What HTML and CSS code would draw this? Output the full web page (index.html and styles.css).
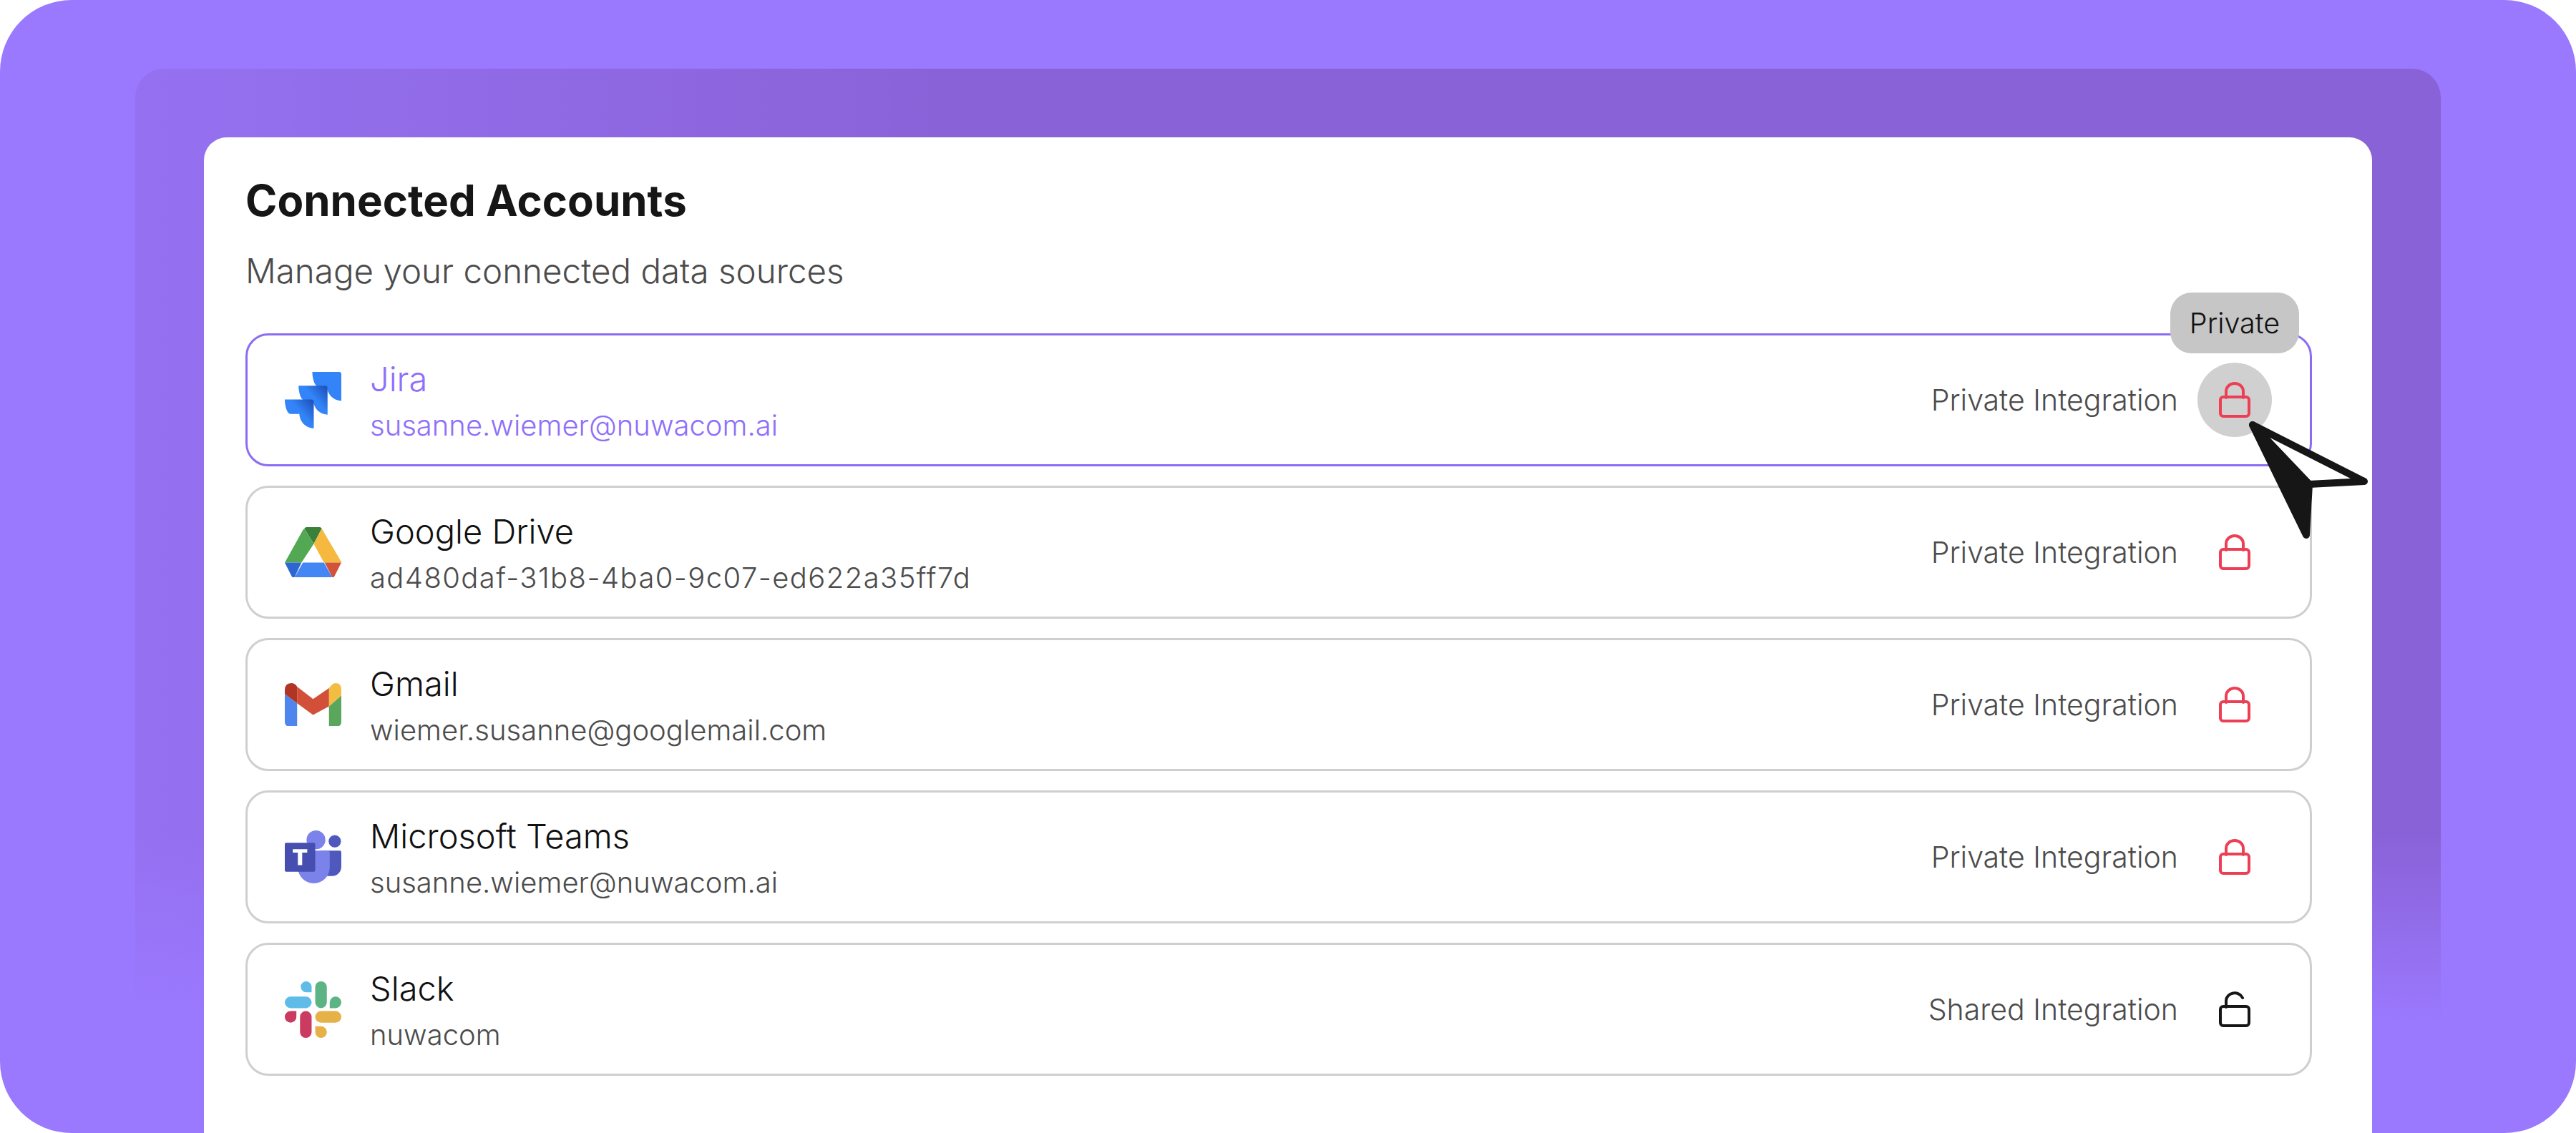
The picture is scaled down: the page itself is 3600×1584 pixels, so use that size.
FILE: index.html
```html
<!DOCTYPE html>
<html lang="en">
<head>
<meta charset="utf-8">
<title>Connected Accounts</title>
<link rel="stylesheet" href="styles.css">
</head>
<body>
<div class="frame">
  <div class="panel">
    <main class="card">
      <h1 class="title">Connected Accounts</h1>
      <p class="subtitle">Manage your connected data sources</p>
      <ul class="list">
        <li class="row row-active">
          <svg class="logo" viewBox="0 0 78 78"><defs><linearGradient id="j2" x1="0.95" y1="0.1" x2="0.55" y2="0.45"><stop offset="0" stop-color="#1f55c0"/><stop offset="1" stop-color="#3384f8"/></linearGradient></defs><path fill="#3384f8" d="M38 0H75a3 3 0 0 1 3 3V40C66 39 59 31 58 20H46C41 20 38 8 38 0Z"/><path fill="url(#j2)" d="M19 19H56a3 3 0 0 1 3 3V59C47 58 40 50 39 39H27C22 39 19 27 19 19Z"/><path fill="url(#j2)" d="M0 38H37a3 3 0 0 1 3 3V78C28 77 21 69 20 58H8C3 58 0 46 0 38Z"/></svg>
          <div class="info"><div class="name">Jira</div><div class="account">susanne.wiemer@nuwacom.ai</div></div>
          <span class="scope">Private Integration</span>
          <div class="lock-wrap lock-hover">
            <svg class="lock lock-red" viewBox="0 0 44 50"><path d="M10 22V13a12 11 0 0 1 24 0V22"/><rect x="2" y="21" width="40" height="27" rx="4"/></svg>
            <span class="tip">Private</span>
          </div>
        </li>
        <li class="row">
          <svg class="logo" viewBox="0 0 78 70"><path fill="#3a7f3a" d="M30 0H48Q50 0 51 2L40 23L27 2Q28 0 30 0Z"/><path fill="#53a853" d="M27 2L40 23L23 49H0L25 4Z"/><path fill="#f4b93e" d="M51 2L78 48L78 49H54L40 23Z"/><path fill="#2d65d1" d="M0 49H23L13 70H12Q10 69 9 67Z"/><path fill="#4486f4" d="M25 49H54L66 70H13Z"/><path fill="#d2523a" d="M55 49H78L69 67Q68 69 66 70Z"/></svg>
          <div class="info"><div class="name">Google Drive</div><div class="account account-id">ad480daf-31b8-4ba0-9c07-ed622a35ff7d</div></div>
          <span class="scope">Private Integration</span>
          <div class="lock-wrap">
            <svg class="lock lock-red" viewBox="0 0 44 50"><path d="M10 22V13a12 11 0 0 1 24 0V22"/><rect x="2" y="21" width="40" height="27" rx="4"/></svg>
          </div>
        </li>
        <li class="row">
          <svg class="logo" viewBox="0 0 78 60"><path fill="#4f86ee" d="M0 15L17 28V60H6a6 6 0 0 1-6-6Z"/><path fill="#5aa65c" d="M61 32L78 17V54a6 6 0 0 1-6 6H61Z"/><path fill="#f3bd41" d="M61 7Q66 0 70 0Q78 0 78 9V17L61 32Z"/><path fill="#b13525" d="M0 10Q0 0 9 0Q14 0 17 5V28L0 15Z"/><path fill="#d2503a" d="M17 5L39 22L61 7V32L39 44L17 28Z"/></svg>
          <div class="info"><div class="name">Gmail</div><div class="account">wiemer.susanne@googlemail.com</div></div>
          <span class="scope">Private Integration</span>
          <div class="lock-wrap">
            <svg class="lock lock-red" viewBox="0 0 44 50"><path d="M10 22V13a12 11 0 0 1 24 0V22"/><rect x="2" y="21" width="40" height="27" rx="4"/></svg>
          </div>
        </li>
        <li class="row">
          <svg class="logo" viewBox="0 0 78 73"><circle cx="69" cy="15" r="8.5" fill="#4e58bd"/><path fill="#4e58bd" d="M48 28H76a2 2 0 0 1 2 2V50a13 13 0 0 1-13 13H48Z"/><circle cx="43" cy="13" r="13" fill="#7b83eb"/><path fill="#7b83eb" d="M22 28H60a2 2 0 0 1 2 2V51a22 22 0 0 1-44 0Z"/><rect y="17" width="42" height="40" rx="2" fill="#464eb0"/><path fill="#fff" d="M11 26H31V30.500H24V48H18V30.500H11Z"/></svg>
          <div class="info"><div class="name">Microsoft Teams</div><div class="account">susanne.wiemer@nuwacom.ai</div></div>
          <span class="scope">Private Integration</span>
          <div class="lock-wrap">
            <svg class="lock lock-red" viewBox="0 0 44 50"><path d="M10 22V13a12 11 0 0 1 24 0V22"/><rect x="2" y="21" width="40" height="27" rx="4"/></svg>
          </div>
        </li>
        <li class="row">
          <svg class="logo" viewBox="0 0 78 78"><rect y="21" width="37" height="16" rx="8" fill="#5fbce9"/><path fill="#5fbce9" d="M37 15H29.500a7.500 7.500 0 1 1 7.500-7.500Z"/><rect x="42" width="16" height="37" rx="8" fill="#5cb383"/><path fill="#5cb383" d="M62 37V29a8 8 0 1 1 8 8Z"/><rect x="21" y="41" width="16" height="37" rx="8" fill="#cb3a60"/><path fill="#cb3a60" d="M16 41V49a8 8 0 1 1-8-8Z"/><rect x="42" y="41" width="36" height="16" rx="8" fill="#e6b146"/><path fill="#e6b146" d="M42 62H50a8 8 0 1 1-8 8Z"/></svg>
          <div class="info"><div class="name">Slack</div><div class="account">nuwacom</div></div>
          <span class="scope">Shared Integration</span>
          <div class="lock-wrap">
            <svg class="lock lock-black" viewBox="0 0 44 50"><path d="M10 22V13a12 11 0 0 1 23-4"/><rect x="2" y="21" width="40" height="27" rx="4"/></svg>
          </div>
        </li>
      </ul>
    </main>
  </div>
  <svg class="cursor" viewBox="0 0 172 170"><path fill="#fff" stroke="#161616" stroke-width="10" stroke-linejoin="round" d="M7 6L163 85L86 89Z"/><path fill="#161616" stroke="#161616" stroke-width="10" stroke-linejoin="round" d="M7 6L86 89L82 160Z"/></svg>
</div>
</body>
</html>
```
FILE: styles.css
```css
* { box-sizing: border-box; }
html, body { margin: 0; padding: 0; background: #fff; }
.frame {
  position: relative;
  width: 3600px;
  height: 1584px;
  overflow: hidden;
  border-radius: 100px;
  background: #9b79ff;
  padding: 96px 189px 0;
  font-family: Inter, "Liberation Sans", sans-serif;
}
.panel {
  height: 1488px;
  border-radius: 40px 40px 0 0;
  padding: 96px 96px 0;
  background:
    linear-gradient(to bottom, rgba(155,121,255,0) 72%, #9b79ff 90%),
    linear-gradient(to right, rgba(155,121,255,.65), rgba(155,121,255,0) 35%),
    #8a62d8;
}
.card {
  height: 1392px;
  background: #fff;
  border-radius: 32px 32px 0 0;
  padding: 50px 84px 0 58px;
}
.title {
  margin: 0;
  font-size: 60px;
  line-height: 76px;
  font-weight: 700;
  color: #161616;
}
.subtitle {
  margin: 33px 0 0;
  font-size: 47.500px;
  line-height: 56px;
  font-weight: 300;
  color: #4c4c4c;
}
.list {
  list-style: none;
  margin: 59px 0 0;
  padding: 0;
  display: flex;
  flex-direction: column;
  gap: 27px;
}
.row {
  height: 186px;
  display: flex;
  align-items: center;
  border: 3px solid #cfcfcf;
  border-radius: 32px;
  padding: 0 53px 0 52px;
}
.row-active { border-color: #8b6cf5; }
.logo { width: 79px; flex: none; display: block; }
.info { flex: 1; margin-left: 40px; padding-top: 6px; }
.name {
  font-size: 47px;
  line-height: 56px;
  font-weight: 300;
  color: #111;
}
.account {
  margin-top: 9px;
  font-size: 40px;
  line-height: 56px;
  font-weight: 300;
  color: #4c4c4c;
}
.account-id { letter-spacing: 1.400px; }
.row-active .name, .row-active .account { color: #8f6ffb; }
.scope {
  font-size: 41px;
  font-weight: 300;
  color: #4c4c4c;
}
.lock-wrap {
  position: relative;
  width: 104px;
  height: 104px;
  margin-left: 27px;
  display: flex;
  align-items: center;
  justify-content: center;
  border-radius: 50%;
}
.lock-hover { background: #d0d0d0; }
.lock { width: 44px; height: 50px; display: block; fill: none; stroke-width: 4; stroke-linecap: round; }
.lock-red { stroke: #ec3f55; }
.lock-black { stroke: #161616; }
.tip {
  position: absolute;
  left: -38px;
  top: -98px;
  width: 180px;
  height: 85px;
  border-radius: 30px;
  background: #c6c6c6;
  display: flex;
  align-items: center;
  justify-content: center;
  font-size: 39.500px;
  font-weight: 300;
  color: #111;
}
.cursor {
  position: absolute;
  left: 3141px;
  top: 588px;
  width: 172px;
  height: 170px;
}
```
